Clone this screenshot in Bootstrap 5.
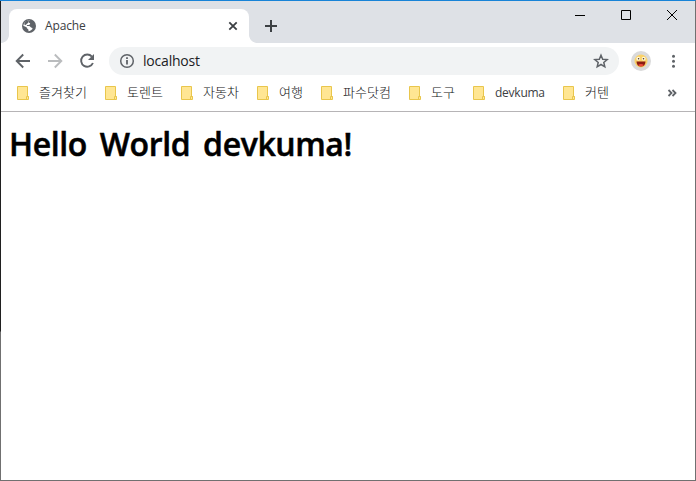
<!DOCTYPE html>
<html lang="ko">
<head>
<meta charset="utf-8">
<meta name="viewport" content="width=device-width, initial-scale=1">
<title>Apache</title>
<link href="https://cdn.jsdelivr.net/npm/bootstrap@5.3.0/dist/css/bootstrap.min.css" rel="stylesheet">
<style>
body{font-family:"Open Sans","Noto Sans CJK KR",sans-serif;color:#3c4043}
.browser{height:481px;border:1px solid #707070;border-top-color:#1883d7;border-left:0;padding-left:1px;background:linear-gradient(#202020 0 330px,#707070 331px) left/1px 100% no-repeat #fff}
.strip{height:42px;background:#dee1e6;padding-left:8px}
.page-tab{width:240px;height:34px;border-radius:8px 8px 0 0;padding:0 10px 0 13px;font-size:12px}
.page-tab::before,.page-tab::after{content:"";position:absolute;bottom:0;width:8px;height:8px}
.page-tab::before{left:-8px;background:radial-gradient(circle at 0 0,transparent 7.5px,#fff 8.2px)}
.page-tab::after{right:-8px;background:radial-gradient(circle at 100% 0,transparent 7.5px,#fff 8.2px)}
.tab-title{margin-left:9px;letter-spacing:-.15px}
.new-tab{margin:11px 0 0 15px}
.win-btn{width:46px;height:28px}
.tools{height:36px;padding:0 13px 0 13px}
.nav-icon{margin-right:14px}
.omni{width:510px;height:28px;background:#f1f3f4;padding:0 10px;margin-left:-1px;font-size:14px;color:#202124}
.omni-text{margin:-2px 0 0 8px;letter-spacing:-.2px}
.avatar{width:20px;height:20px;background:#dadada;margin-left:12px}
.marks{height:33px;padding:0 18px 5px 16px;gap:18px;border-bottom:1px solid #b6b4b6;font-size:13px;letter-spacing:.04px}
.mark-item{gap:10px;line-height:18px;white-space:nowrap}
.mark-item span{margin-top:-2px;font-weight:300;color:#101113}
.mark-item .latin{margin-top:0;font-size:12px;width:50px;font-weight:400;letter-spacing:-.25px;color:#3c4043}
.hello{font-size:32px;font-weight:600;color:#000;margin:10px 0 0 8px;line-height:43px;white-space:nowrap;letter-spacing:-.4px;word-spacing:5px;-webkit-text-stroke:.5px #000}
svg{display:block;flex:none}
</style>
<script src="https://cdn.jsdelivr.net/npm/bootstrap@5.3.0/dist/js/bootstrap.bundle.min.js"></script>
</head>
<body class="overflow-hidden">
<svg class="d-none"><symbol id="folder" viewBox="0 0 12 14"><path d="M.5.5h10v10h1v3H.5z" fill="#ffe693" stroke="#e9c64c"/><path d="M9.500 13v-2.500h2" fill="none" stroke="#e9c64c"/></symbol></svg>
<div class="browser d-flex flex-column">
  <header class="strip d-flex align-items-end">
    <div class="page-tab bg-white position-relative d-flex align-items-center">
      <svg width="14" height="14" viewBox="0 0 14 14"><circle cx="7" cy="7" r="7" fill="#5f6368"/><path d="M8 1.600C6.600 2.200 6.200 3 6.700 3.600c.5.500 1.200.3 1.400 1 .2 1-.6 1.300-1.500 1.400H5.200c-.5.400-.4.900 0 1.100h2c1 .3 1.200 1 1.800 1.300.7.300 1.400.2 1.500.9.100.9-.8 1.500-1.500 1.900-.9.700-1.700 1-2.600 1.100.1-.8.300-1.600-.3-2.100C5.200 9.600 5 9.500 4.800 8.700 4.400 7.600 2.700 7.600 1.400 7c0-3 2.500-5.500 5.600-5.500z" fill="#fff"/><path d="M2.300 4.400C3.300 2.500 5 1.300 7.200 1.300L6.200 3.500c-.2 1-1.300 1-1.700 1.700-.5.800-1.300.8-2 .5z" fill="#5f6368"/></svg>
      <span class="tab-title">Apache</span>
      <svg class="ms-auto" width="12" height="12" viewBox="0 0 12 12"><path d="M2.300 2.300l7.400 7.400M9.700 2.300l-7.400 7.400" stroke="#3c4043" stroke-width="1.800"/></svg>
    </div>
    <svg class="new-tab align-self-start" width="14" height="28" viewBox="0 0 14 28"><path d="M7 8v12M1 14h12" stroke="#3c4043" stroke-width="2"/></svg>
    <div class="d-flex align-self-start ms-auto">
      <svg class="win-btn" viewBox="0 0 46 28"><path d="M18 14.500h10" stroke="#000"/></svg>
      <svg class="win-btn" viewBox="0 0 46 28"><path d="M18.500 9.500h9v9h-9z" fill="none" stroke="#000"/></svg>
      <svg class="win-btn" viewBox="0 0 46 28"><path d="M18 9l10 10M28 9L18 19" stroke="#000"/></svg>
    </div>
  </header>
  <div class="tools d-flex align-items-center">
    <svg class="nav-icon" width="18" height="18" viewBox="0 0 18 18"><path d="M16 9H3M9.200 2.500L2.700 9l6.500 6.500" fill="none" stroke="#5f6368" stroke-width="1.900"/></svg>
    <svg class="nav-icon" width="18" height="18" viewBox="0 0 18 18"><path d="M2 9h13M8.800 2.500L15.300 9l-6.500 6.500" fill="none" stroke="#babcbe" stroke-width="1.900"/></svg>
    <svg class="nav-icon" width="18" height="18" viewBox="0 0 18 18"><path d="M13.900 4.700A6.100 6.100 0 1 0 14.900 11" fill="none" stroke="#5f6368" stroke-width="1.900"/><path d="M16 2v6H10z" fill="#5f6368"/></svg>
    <div class="omni rounded-pill d-flex align-items-center">
      <svg width="16" height="16" viewBox="0 0 16 16"><circle cx="8" cy="8" r="6.300" fill="none" stroke="#5f6368" stroke-width="1.500"/><path d="M8 7v4.500M8 4.300V6" stroke="#5f6368" stroke-width="1.800"/></svg>
      <span class="omni-text">localhost</span>
      <svg class="ms-auto" width="16" height="16" viewBox="0 0 16 16"><path d="M8 2.200l1.700 4 4.500.4-3.400 2.900 1 4.300L8 11.500l-3.800 2.300 1-4.300-3.400-2.900 4.500-.4z" fill="none" stroke="#5f6368" stroke-width="1.500"/></svg>
    </div>
    <div class="avatar rounded-circle d-flex align-items-center justify-content-center">
      <svg width="14" height="14" viewBox="0 0 14 14"><circle cx="7" cy="7" r="6.500" fill="#fbd268"/><circle cx="4.300" cy="4.700" r="1.900" fill="#fff8dc"/><circle cx="9.700" cy="4.700" r="1.900" fill="#fff8dc"/><circle cx="4.600" cy="4.800" r=".8" fill="#4b3422"/><circle cx="9.500" cy="4.800" r=".8" fill="#4b3422"/><path d="M2.500 7.500h9c0 3-1.700 5-4.500 5s-4.500-2-4.500-5z" fill="#8c1d12"/><path d="M4.200 11c1.300-1.300 4.300-1.300 5.600 0-1.300 1.800-4.300 1.800-5.600 0z" fill="#ef4a3b"/></svg>
    </div>
    <svg class="ms-auto" width="18" height="18" viewBox="0 0 18 18" fill="#5f6368"><circle cx="9.500" cy="4.300" r="1.500"/><circle cx="9.500" cy="9.300" r="1.500"/><circle cx="9.500" cy="14.300" r="1.500"/></svg>
  </div>
  <nav class="marks d-flex align-items-center">
    <div class="mark-item d-flex align-items-center"><svg width="12" height="14"><use href="#folder"/></svg><span>즐겨찾기</span></div>
    <div class="mark-item d-flex align-items-center"><svg width="12" height="14"><use href="#folder"/></svg><span>토렌트</span></div>
    <div class="mark-item d-flex align-items-center"><svg width="12" height="14"><use href="#folder"/></svg><span>자동차</span></div>
    <div class="mark-item d-flex align-items-center"><svg width="12" height="14"><use href="#folder"/></svg><span>여행</span></div>
    <div class="mark-item d-flex align-items-center"><svg width="12" height="14"><use href="#folder"/></svg><span>파수닷컴</span></div>
    <div class="mark-item d-flex align-items-center"><svg width="12" height="14"><use href="#folder"/></svg><span>도구</span></div>
    <div class="mark-item d-flex align-items-center"><svg width="12" height="14"><use href="#folder"/></svg><span class="latin">devkuma</span></div>
    <div class="mark-item d-flex align-items-center"><svg width="12" height="14"><use href="#folder"/></svg><span>커텐</span></div>
    <svg class="ms-auto" width="10" height="8" viewBox="0 0 10 8"><path d="M1.500 1l3 3-3 3M5.500 1l3 3-3 3" fill="none" stroke="#5f6368" stroke-width="1.800"/></svg>
  </nav>
  <main class="flex-grow-1"><h1 class="hello">Hello World devkuma!</h1></main>
</div>
</body>
</html>
